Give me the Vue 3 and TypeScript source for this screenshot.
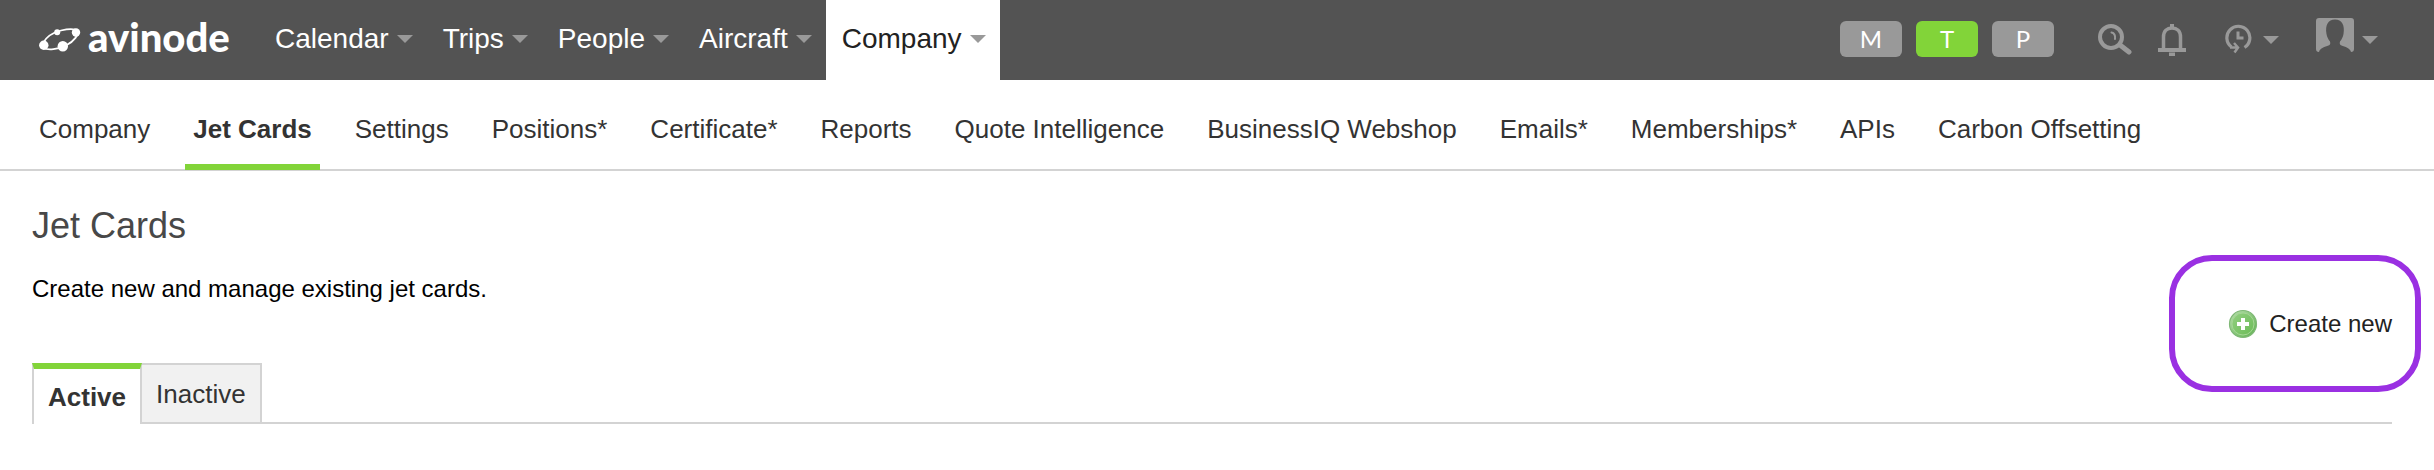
<script setup lang="ts">
import { ref } from 'vue'

const mainMenu: string[] = ['Calendar', 'Trips', 'People', 'Aircraft', 'Company']
const activeMenu = ref('Company')

const modes: string[] = ['M', 'T', 'P']
const activeMode = ref('T')

const sections: string[] = [
  'Company',
  'Jet Cards',
  'Settings',
  'Positions*',
  'Certificate*',
  'Reports',
  'Quote Intelligence',
  'BusinessIQ Webshop',
  'Emails*',
  'Memberships*',
  'APIs',
  'Carbon Offsetting',
]
const activeSection = ref('Jet Cards')

const tabs: string[] = ['Active', 'Inactive']
const activeTab = ref('Active')
</script>

<template>
  <div class="page">
    <header class="topbar">
      <a class="brand" href="#">
        <svg class="brand-mark" width="42" height="24" viewBox="0 0 42 24" aria-hidden="true">
          <path d="M4 15C7 9.500 14 4.500 22 2.500C29 .8 36 .6 38.500 3C40.500 6 35 13.500 27 17.500C19 21.500 9 22.500 4 20" fill="none" stroke="#fff" stroke-width="1.800" />
          <circle cx="4.800" cy="17.300" r="4.700" fill="#fff" />
          <circle cx="18.200" cy="4.300" r="3" fill="#fff" />
          <circle cx="37" cy="4.500" r="4.200" fill="#fff" />
          <circle cx="23.800" cy="18.300" r="5.200" fill="#fff" />
        </svg>
        <span class="brand-name">avinode</span>
      </a>

      <nav class="main-menu" aria-label="Main">
        <a
          v-for="item in mainMenu"
          :key="item"
          href="#"
          class="menu-item"
          :class="{ active: item === activeMenu }"
          @click.prevent="activeMenu = item"
        >{{ item }}<span class="caret"></span></a>
      </nav>

      <div class="modes">
        <button
          v-for="mode in modes"
          :key="mode"
          type="button"
          class="mode"
          :class="{ on: mode === activeMode }"
          @click="activeMode = mode"
        >{{ mode }}</button>
      </div>

      <div class="tools">
        <button type="button" class="tool" aria-label="Search">
          <svg width="34" height="32" viewBox="0 0 34 32" fill="none" stroke="#999">
            <circle cx="13" cy="13" r="11" stroke-width="4" />
            <path d="M13.500 8.500C16 9 17.500 11 17 15" stroke-width="2" stroke-linecap="round" />
            <path d="M22 21L31 28" stroke-width="5" stroke-linecap="round" />
          </svg>
        </button>
        <button type="button" class="tool" aria-label="Notifications">
          <svg width="28" height="32" viewBox="0 0 28 32" fill="none" stroke="#999">
            <path d="M5.500 25V13C5.500 7 9 4 14 4S22.500 7 22.500 13V25" stroke-width="3.500" />
            <path d="M0 26H28" stroke-width="4" />
            <path d="M14 0V4M11 30.500H17" stroke-width="4" />
          </svg>
        </button>
        <button type="button" class="tool history" aria-label="History">
          <svg width="28" height="32" viewBox="0 0 28 32" fill="none" stroke="#999">
            <path d="M19.500 23.500A11.500 11.500 0 1 0 6.500 23" stroke-width="3.200" />
            <path d="M5 23.500H12M9 19L13 23.500L9.500 28.500" stroke-width="2.500" />
            <path d="M13 7.500V14H18.500" stroke-width="3" />
          </svg>
          <span class="caret"></span>
        </button>
        <button type="button" class="tool account" aria-label="Account">
          <svg width="38" height="34" viewBox="0 0 38 34">
            <path d="M3 0H35Q38 0 38 3V31Q38 34 35 34C34 30 29 28.500 25.500 27.500Q23 26.500 24 23.500C26 21 27 18.500 27.500 16C29 7 26 1.500 19 1.500S9 7 10.500 16C11 18.500 12 21 14 23.500Q15 26.500 12.500 27.500C9 28.500 4 30 3 34Q0 34 0 31V3Q0 0 3 0Z" fill="#999" />
          </svg>
          <span class="caret"></span>
        </button>
      </div>
    </header>

    <nav class="sections" aria-label="Company sections">
      <a
        v-for="item in sections"
        :key="item"
        href="#"
        class="section"
        :class="{ active: item === activeSection }"
        @click.prevent="activeSection = item"
      >{{ item }}</a>
    </nav>

    <main class="content">
      <h1>Jet Cards</h1>
      <p class="lead">Create new and manage existing jet cards.</p>

      <div class="tab-row">
        <div class="tabs" role="tablist">
          <button
            v-for="tab in tabs"
            :key="tab"
            type="button"
            role="tab"
            class="tab"
            :class="{ active: tab === activeTab }"
            :aria-selected="tab === activeTab"
            @click="activeTab = tab"
          >{{ tab }}</button>
        </div>
        <a class="create" href="#">
          <svg width="30" height="30" viewBox="0 0 30 30" aria-hidden="true">
            <defs>
              <linearGradient id="plusFill" x1="0" y1="0" x2="1" y2="1">
                <stop offset="0" stop-color="#b9dfae" />
                <stop offset="1" stop-color="#5cb04c" />
              </linearGradient>
            </defs>
            <circle cx="15" cy="15" r="13.500" fill="url(#plusFill)" stroke="#7fb876" stroke-width="1.200" />
            <circle cx="15" cy="15" r="11" fill="#74c45c" fill-opacity=".5" stroke="#a5d795" stroke-width="1" />
            <path d="M15 9V21M9 15H21" stroke="#fff" stroke-width="4" />
          </svg>
          Create new
        </a>
      </div>
    </main>
  </div>
</template>

<style>
body {
  margin: 0;
  background: #fff;
}
</style>

<style scoped>
.page {
  font-family: "Liberation Sans", Arial, sans-serif;
  color: #333;
}

a {
  color: inherit;
  text-decoration: none;
}

button {
  margin: 0;
  padding: 0;
  border: 0;
  background: none;
  font-family: inherit;
  color: inherit;
  cursor: pointer;
}

svg {
  display: block;
  flex: none;
}

.topbar {
  display: flex;
  height: 80px;
  padding: 0 56px 0 39px;
  background: #535353;
}

.brand {
  display: flex;
  align-items: center;
  gap: 7px;
  width: 220px;
  color: #fff;
}

.brand-name {
  padding-bottom: 6px;
  font: 900 40px/48px Lato, sans-serif;
}

.main-menu {
  display: flex;
}

.menu-item {
  display: flex;
  align-items: center;
  gap: 8px;
  padding: 0 14px 2px 16px;
  font-size: 28px;
  color: #fff;
}

.menu-item.active {
  background: #fff;
  color: #222;
}

.caret {
  border: 8px solid transparent;
  border-top-color: #999;
  border-bottom: 0;
}

.modes {
  display: flex;
  align-items: center;
  gap: 14px;
  margin-left: auto;
  padding-bottom: 2px;
}

.mode {
  width: 62px;
  height: 36px;
  border-radius: 6px;
  background: #999;
  color: #fff;
  font: 24px/36px Lato, sans-serif;
}

.mode.on {
  background: #82d439;
}

.tools {
  display: flex;
  align-items: center;
  gap: 26px;
  margin-left: 44px;
}

.tool {
  display: flex;
  align-items: center;
}

.history {
  gap: 10px;
  margin-left: 13px;
}

.account {
  gap: 8px;
  margin-left: 11px;
}

.account svg {
  margin-bottom: 10px;
}

.sections {
  display: flex;
  gap: 27px;
  height: 89px;
  padding: 0 31px;
  border-bottom: 2px solid #d3d3d3;
}

.section {
  height: 84px;
  padding: 0 8px;
  border-bottom: 6px solid transparent;
  font-size: 26px;
  line-height: 98px;
  white-space: nowrap;
}

.section.active {
  border-bottom-color: #82d439;
  font-weight: bold;
}

.content {
  padding: 34px 42px 0 32px;
}

h1 {
  margin: 0;
  font-size: 36px;
  font-weight: normal;
  line-height: 42px;
  color: #484848;
}

.lead {
  margin: 26px 0 0;
  font-size: 24px;
  line-height: 32px;
  color: #000;
}

.tab-row {
  display: flex;
  justify-content: space-between;
  align-items: flex-end;
  margin-top: 4px;
  border-bottom: 2px solid #d3d3d3;
}

.tabs {
  display: flex;
  margin-bottom: -2px;
}

.tab {
  height: 61px;
  padding: 0 14px;
  border: 2px solid #d3d3d3;
  border-left: 0;
  background: #f1f1f1;
  font-size: 26px;
  line-height: 56px;
}

.tab.active {
  border-top: 6px solid #82d439;
  border-left: 2px solid #d3d3d3;
  border-bottom: 0;
  background: #fff;
  font-weight: bold;
}

.create {
  position: relative;
  display: flex;
  align-items: center;
  gap: 11px;
  margin-bottom: 83px;
  font-size: 24px;
  line-height: 30px;
  color: #222;
}

/* Highlight ring drawn over the page around the create action */
.create::after {
  content: "";
  position: absolute;
  inset: -54px -29px -53px -59px;
  border: 6px solid #9a30e2;
  border-radius: 43px;
  pointer-events: none;
}
</style>
